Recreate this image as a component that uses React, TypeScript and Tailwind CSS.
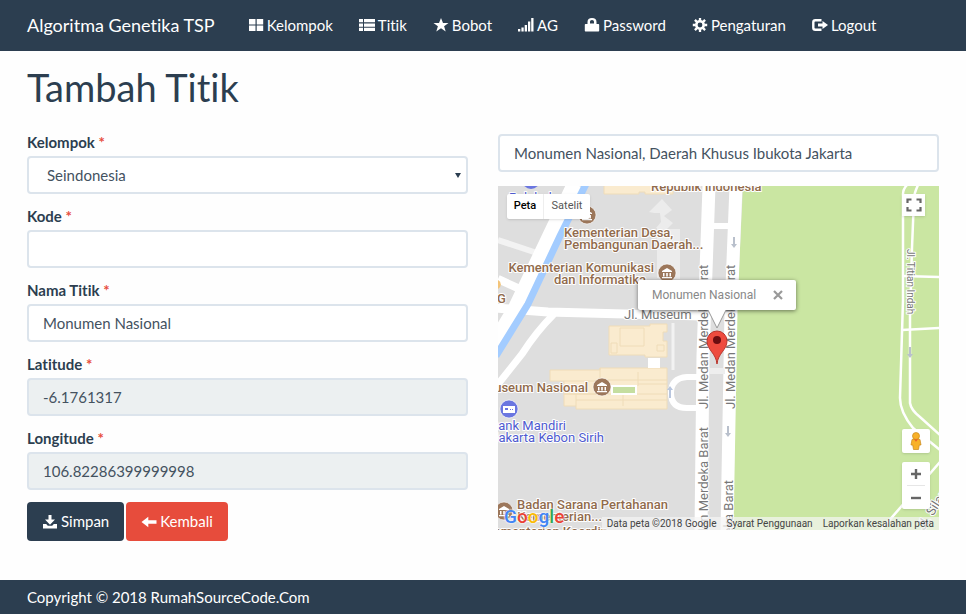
import type { ReactNode } from 'react';

const Glyph = ({ children }: { children: ReactNode }) => (
  <svg viewBox="0 0 16 14" className="h-[14px] w-4 shrink-0 fill-current" aria-hidden="true">
    {children}
  </svg>
);

const icons = {
  thLarge: <path d="M1 1h6.500v5.500H1zM8.700 1h6.500v5.500H8.700zM1 7.500h6.500V13H1zM8.700 7.500h6.500V13H8.700z" />,
  thList: <path d="M0 1h4v3.300H0zM5 1h11v3.300H5zM0 5.400h4v3.300H0zM5 5.400h11v3.300H5zM0 9.800h4v3.300H0zM5 9.800h11v3.300H5z" />,
  star: <path d="M8 0l2 5h5.500l-4.400 3.200L12.700 13.500 8 10.300 3.300 13.500l1.600-5.300L.5 5H6z" />,
  signal: <path d="M0 11h2.300v2.500H0zM3.400 9.500h2.300v4H3.400zM6.700 7h2.300v6.500H6.700zM10 3.500h2.300v10H10zM13.200 0h2.300v13.500h-2.300z" />,
  lock: (
    <path
      fillRule="evenodd"
      d="M3.500 6V4C3.500 1.500 5 0 8 0s4.500 1.500 4.500 4v2h1.700c.6 0 1 .4 1 1v5.500c0 .6-.4 1-1 1H1.800c-.6 0-1-.4-1-1V7c0-.6.4-1 1-1zM6 5.500h4V4c0-1.300-.7-2-2-2s-2 .7-2 2z"
    />
  ),
  cog: (
    <>
      <circle cx="8" cy="7" r="3.700" fill="none" stroke="currentColor" strokeWidth="2.600" />
      <path
        d="M8 0v2.800M8 11.200V14M.8 7h2.800M12.400 7h2.800M2.900 1.900l2 2M11.100 10.100l2 2M13.100 1.900l-2 2M4.900 10.100l-2 2"
        fill="none"
        stroke="currentColor"
        strokeWidth="2.300"
      />
    </>
  ),
  logOut: (
    <>
      <path d="M9.500 2.200H3.300c-1.300 0-2 .7-2 2v5.600c0 1.300.7 2 2 2h6.200" fill="none" stroke="currentColor" strokeWidth="2.400" />
      <path d="M6 5.500h4.500V3L16 7l-5.500 4V8.500H6z" />
    </>
  ),
  save: <path d="M6.500 0h3v4.500H13L8 9.700 3 4.500h3.500zM1 9h3.200l1.600 1.700h4.400L11.800 9H15v4.500H1z" />,
  back: <path d="M.5 7l6.800-5.300v3.500H15.500v3.600H7.300v3.500z" />,
};

const menu = [
  { label: 'Kelompok', icon: icons.thLarge },
  { label: 'Titik', icon: icons.thList },
  { label: 'Bobot', icon: icons.star },
  { label: 'AG', icon: icons.signal },
  { label: 'Password', icon: icons.lock },
  { label: 'Pengaturan', icon: icons.cog },
  { label: 'Logout', icon: icons.logOut },
];

const fields = [
  { id: 'kode', label: 'Kode', value: '', readOnly: false },
  { id: 'nama', label: 'Nama Titik', value: 'Monumen Nasional', readOnly: false },
  { id: 'lat', label: 'Latitude', value: '-6.1761317', readOnly: true },
  { id: 'lng', label: 'Longitude', value: '106.82286399999998', readOnly: true },
];

const control =
  'h-[38px] w-full rounded border-2 border-[#dce4ec] px-[14px] text-[15px] text-[#44525f] outline-none focus:border-[#2c3e50]';

const Label = ({ id, children }: { id: string; children: ReactNode }) => (
  <label htmlFor={id} className="mb-1 block text-[15px] leading-5 font-bold">
    {children} <span className="text-[#e74c3c]">*</span>
  </label>
);

const Poi = ({ x, y }: { x: number; y: number }) => (
  <g transform={`translate(${x} ${y})`}>
    <circle r="9" fill="#9c775b" stroke="#fff" strokeOpacity="0.6" />
    <path d="M-5-2L0-5l5 3v1H-5zM-4 0h1.500v3.500H-4zM-.8 0H.8v3.500H-.8zM2.500 0H4v3.500H2.500zM-5 4H5v1.300H-5z" fill="#fff" />
  </g>
);

const Arrow = ({ x, y }: { x: number; y: number }) => (
  <path transform={`translate(${x} ${y})`} d="M-1 0h2v7h2l-3 4-3-4h2z" fill="#b9c0cc" />
);

const MapDrawing = () => (
  <svg
    viewBox="0 0 441 344"
    preserveAspectRatio="xMidYMid slice"
    className="block h-full w-full"
    fontFamily="Roboto, 'Liberation Sans', sans-serif"
    role="img"
    aria-label="Peta Monumen Nasional"
  >
    <rect width="441" height="344" fill="#dedede" />
    <path d="M245 0L239 125 235 344H441V0z" fill="#cae6a2" />

    {/* open ground and paths */}
    <path d="M159 92V42h-1l5-6-1-9-6 0-5-1 13-13 10 11-8 6 9 7-6 6h13v50z" fill="#ececec" />
    <path d="M175 137V184" stroke="#f2f2f2" strokeWidth="3" />
    <path d="M0 54L39 67" stroke="#f3f3f3" strokeWidth="6" />

    {/* streets */}
    <g fill="none" stroke="#fff">
      <path d="M77-2L18 122-6 162" strokeWidth="16" />
      <path d="M0 93L24 104" strokeWidth="8" />
      <path d="M-2 122L50 126 205 130" strokeWidth="9" />
      <path d="M56 128Q38 146 24 168L-3 202" strokeWidth="7" />
      <path d="M211 0L205 170 203 344" strokeWidth="13" />
      <path d="M238 0L233 125 229 344" strokeWidth="13" />
      <path d="M211 40H238" strokeWidth="6" />
      <path d="M204 191H189Q173 192 173 207T189 222H204" strokeWidth="6" />
      <g strokeWidth="2.500">
        <path d="M409-1Q405 3 405 8L405 114 402 212Q402 226 415 242L442 264" />
        <path d="M420-1Q416 8 416 12L414 62 412 131V217Q413 224 422 231L442 249" />
        <path d="M404 90L442 91M404 144L442 142M442 276L382 345M430 316L442 321" />
      </g>
    </g>
    <path d="M211 182H227V188H211z" fill="#eee" />
    <path d="M88-2L62 50 30 118-2 170" fill="none" stroke="#a3ccff" strokeWidth="7" />

    {/* buildings */}
    <g fill="#faebcf" stroke="#efdcb8">
      <path d="M106-1H175V8H147V6H141V8H106z" />
      <path d="M111 140H152V138H169V146H165V155H169V171H147V169H111z" />
      <path d="M52 184H102V182H169V223H78V220H66V195H52z" />
      <path d="M122 142H146V160H122zM113 157H119V167H113zM159 159H166V165H159zM66 195H100V208H66M66 208H169M78 214H169M140 186V200M140 198H169M78 208V220M102 182V194H169M125 208V220" fill="none" />
      <path d="M0 94a5 5 0 010 9z" fill="#f3c479" stroke="none" />
    </g>
    <path d="M150 172H162V182H150z" fill="#fff" />
    <path d="M114 200H138V208H114z" fill="#c5dea0" stroke="#fff" strokeWidth="2" />

    <Arrow x={236} y={51} />
    <Arrow x={230} y={240} />
    <Arrow x={412} y={161} />
    <path d="M171 212V204h-2l3-4 3 4h-2v8z" fill="#b9c6de" />

    <Poi x={89} y={29} />
    <Poi x={169} y={87} />
    <Poi x={104} y={201} />
    <Poi x={6} y={325} />
    <circle cx="33" cy="-6" r="9" fill="#6a76e0" />
    <circle cx="11" cy="223" r="9" fill="#6a76e0" stroke="#fff" strokeOpacity="0.6" />
    <path d="M5 220H17V227H5z" fill="#fff" />
    <path d="M7 222h3v2H7zM12 223h1v1h-1zM14 223h1v1h-1z" fill="#6a76e0" />

    {/* place names */}
    <g fontSize="13" fontWeight="500" fill="#916b4c" stroke="#fff" strokeWidth="2" strokeLinejoin="round" paintOrder="stroke">
      <text x="153" y="5">Republik Indonesia</text>
      <text x="66" y="51">Kementerian Desa,</text>
      <text x="66" y="63">Pembangunan Daerah...</text>
      <text x="156" y="86" textAnchor="end">Kementerian Komunikasi</text>
      <text x="148" y="98" textAnchor="end">dan Informatika</text>
      <text x="-1" y="117">G</text>
      <text x="90" y="206" textAnchor="end">Museum Nasional</text>
      <text x="19" y="323">Badan Sarana Pertahanan</text>
      <text x="104" y="335" textAnchor="end">Kementerian...</text>
      <text x="110" y="350" textAnchor="end">Kementerian Koordin</text>
      <g fill="#4f5bd0" fontWeight="400">
        <text x="11" y="16">Pelabuhan</text>
        <text x="68" y="244" textAnchor="end">Bank Mandiri</text>
        <text x="106" y="256" textAnchor="end">Jakarta Kebon Sirih</text>
      </g>
      <g fill="#777" fontWeight="400">
        <text x="126" y="133">Jl. Museum</text>
        <text transform="translate(210 223) rotate(-90)">Jl. Medan Merdeka Barat</text>
        <text transform="translate(237 223) rotate(-90)">Jl. Medan Merdeka Barat</text>
        <text transform="translate(210 241) rotate(-90)" textAnchor="end">Jl. Medan Merdeka Barat</text>
        <text transform="translate(235 294) rotate(-90)" textAnchor="end">Jl. Medan Merdeka Barat</text>
        <text transform="translate(409 63) rotate(90)" fontSize="10">Jl. Titian Indah</text>
        <text transform="translate(426 345) rotate(-58)">Jl. Silang</text>
      </g>
    </g>
  </svg>
);

const TitikMap = () => (
  <div className="relative mt-[14px] h-[344px] overflow-hidden font-[Roboto,'Liberation_Sans',sans-serif]">
    <MapDrawing />

    <div className="absolute top-2 left-[9px] flex h-[25px] rounded-xs bg-white text-[11px] shadow">
      <button type="button" className="w-[37px] border-r border-[#eee] font-medium text-black">Peta</button>
      <button type="button" className="w-[46px] text-[#565656]">Satelit</button>
    </div>

    <button type="button" aria-label="Layar penuh" className="absolute top-2 right-[14px] flex h-[22px] w-[23px] items-center justify-center bg-white shadow">
      <svg viewBox="0 0 16 14" className="h-[14px] w-4" fill="none" stroke="#666" strokeWidth="2.200">
        <path d="M1.500 5V1.500h4M10.500 1.500h4V5M14.500 9v3.500h-4M5.500 12.500h-4V9" />
      </svg>
    </button>

    {/* info window with its tail and the marker below */}
    <div className="absolute top-[94px] left-[219px] flex -translate-x-1/2 flex-col items-center">
      <div className="flex h-[30px] w-[158px] items-center justify-between rounded-xs bg-white pr-[13px] pl-[14px] text-xs text-[#888] shadow-[0_1px_4px_rgba(0,0,0,0.5)]">
        <span className="whitespace-nowrap">Monumen Nasional</span>
        <button type="button" aria-label="Tutup">
          <svg viewBox="0 0 10 10" className="size-[10px]" stroke="#999" strokeWidth="2.200">
            <path d="M1 1l8 8M9 1L1 9" />
          </svg>
        </button>
      </div>
      <svg viewBox="0 0 24 55" className="relative h-[55px] w-6">
        <path d="M3 0L12 18 21 0" fill="#fff" stroke="#999" />
        <path d="M12 54C11 43 2 40 2 31a10 10 0 0120 0c0 9-9 12-10 23z" fill="#ee4b3e" stroke="#b8352c" />
        <circle cx="12" cy="30" r="4" fill="#6b0d10" />
      </svg>
    </div>

    <button type="button" aria-label="Street View" className="absolute right-[9px] bottom-[77px] flex h-6 w-7 items-center justify-center rounded-xs bg-white shadow">
      <svg viewBox="0 0 12 18" className="h-[18px] w-3" fill="#f8b128" stroke="#c98a1c" strokeWidth="0.700">
        <path d="M2 7.500Q6 5.500 10 7.500L11 13H9.300L8.500 17.500H3.500L2.700 13H1z" />
        <circle cx="6" cy="4" r="3.500" />
        <path d="M4 7.300h4L6 9.800z" fill="#e8622a" stroke="none" />
      </svg>
    </button>

    <div className="absolute right-[9px] bottom-[21px] flex h-[47px] w-7 flex-col items-center rounded-xs bg-white shadow">
      <button type="button" aria-label="Perbesar" className="flex w-[18px] flex-1 items-center justify-center border-b border-[#e6e6e6]">
        <svg viewBox="0 0 10 10" className="size-[10px]" stroke="#666" strokeWidth="2.400"><path d="M0 5h10M5 0v10" /></svg>
      </button>
      <button type="button" aria-label="Perkecil" className="flex w-[18px] flex-1 items-center justify-center">
        <svg viewBox="0 0 10 10" className="size-[10px]" stroke="#666" strokeWidth="2.400"><path d="M0 5h10" /></svg>
      </button>
    </div>

    <a href="#" aria-label="Google" className="absolute bottom-[3px] left-[6px] text-[19px] leading-5 font-medium [text-shadow:0_0_2px_#fff,0_0_2px_#fff]">
      <span className="text-[#4285f4]">G</span>
      <span className="text-[#ea4335]">o</span>
      <span className="text-[#fbbc05]">o</span>
      <span className="text-[#4285f4]">g</span>
      <span className="text-[#34a853]">l</span>
      <span className="text-[#ea4335]">e</span>
    </a>

    <div className="absolute right-0 bottom-0 flex h-[13px] items-center bg-[#f5f5f5]/70 text-[10px] leading-3 whitespace-nowrap text-[#444]">
      <span className="px-[5px]">Data peta ©2018 Google</span>
      <a href="#" className="px-[5px]">Syarat Penggunaan</a>
      <a href="#" className="px-[5px]">Laporkan kesalahan peta</a>
    </div>
  </div>
);

const App = () => (
  <div className="flex min-h-screen flex-col bg-[#fefefe] font-[Lato,'Liberation_Sans',sans-serif] text-[#2c3e50] [font-variant-ligatures:none]">
    <nav className="flex min-h-[51px] flex-wrap items-center gap-x-[26px] bg-[#2c3e50] px-[27px] pb-[2px] text-white">
      <a href="#" className="mr-[7px] text-lg leading-6">Algoritma Genetika TSP</a>
      {menu.map((item) => (
        <a key={item.label} href="#" className="flex items-center gap-[3px] text-[15px] leading-6">
          <Glyph>{item.icon}</Glyph>
          {item.label}
        </a>
      ))}
    </nav>

    <main className="px-[27px] pt-4 pb-9">
      <h1 className="mb-[25px] text-[38px] leading-10">Tambah Titik</h1>

      <div className="grid grid-cols-2 gap-[30px]">
        <form>
          <div className="mb-3">
            <Label id="kelompok">Kelompok</Label>
            <div className="relative">
              <select id="kelompok" className={`${control} appearance-none bg-white pl-[18px]`}>
                <option>Seindonesia</option>
              </select>
              <svg viewBox="0 0 6 5" className="pointer-events-none absolute top-[17px] right-[7px] h-[5px] w-[6px]" fill="#2c3e50">
                <path d="M0 0h6L3 5z" />
              </svg>
            </div>
          </div>
          {fields.map((field) => (
            <div key={field.id} className="mb-3">
              <Label id={field.id}>{field.label}</Label>
              <input
                id={field.id}
                type="text"
                defaultValue={field.value}
                readOnly={field.readOnly}
                className={`${control} ${field.readOnly ? 'bg-[#ecf0f1]' : 'bg-white'}`}
              />
            </div>
          ))}
          <div className="flex gap-[2px]">
            <button type="button" className="flex h-[39px] items-center gap-[3px] rounded bg-[#2c3e50] px-[15px] text-[15px] text-white">
              <Glyph>{icons.save}</Glyph>
              Simpan
            </button>
            <a href="#" className="flex h-[39px] items-center gap-[3px] rounded bg-[#e74c3c] px-[15px] text-[15px] text-white">
              <Glyph>{icons.back}</Glyph>
              Kembali
            </a>
          </div>
        </form>

        <div className="pt-[2px]">
          <input
            type="text"
            aria-label="Cari lokasi"
            defaultValue="Monumen Nasional, Daerah Khusus Ibukota Jakarta"
            className={`${control} bg-white`}
          />
          <TitikMap />
        </div>
      </div>
    </main>

    <footer className="mt-auto bg-[#2c3e50] px-[27px] py-[5px] text-[15px] leading-6 text-white">
      Copyright © 2018 RumahSourceCode.Com
    </footer>
  </div>
);

export default App;
